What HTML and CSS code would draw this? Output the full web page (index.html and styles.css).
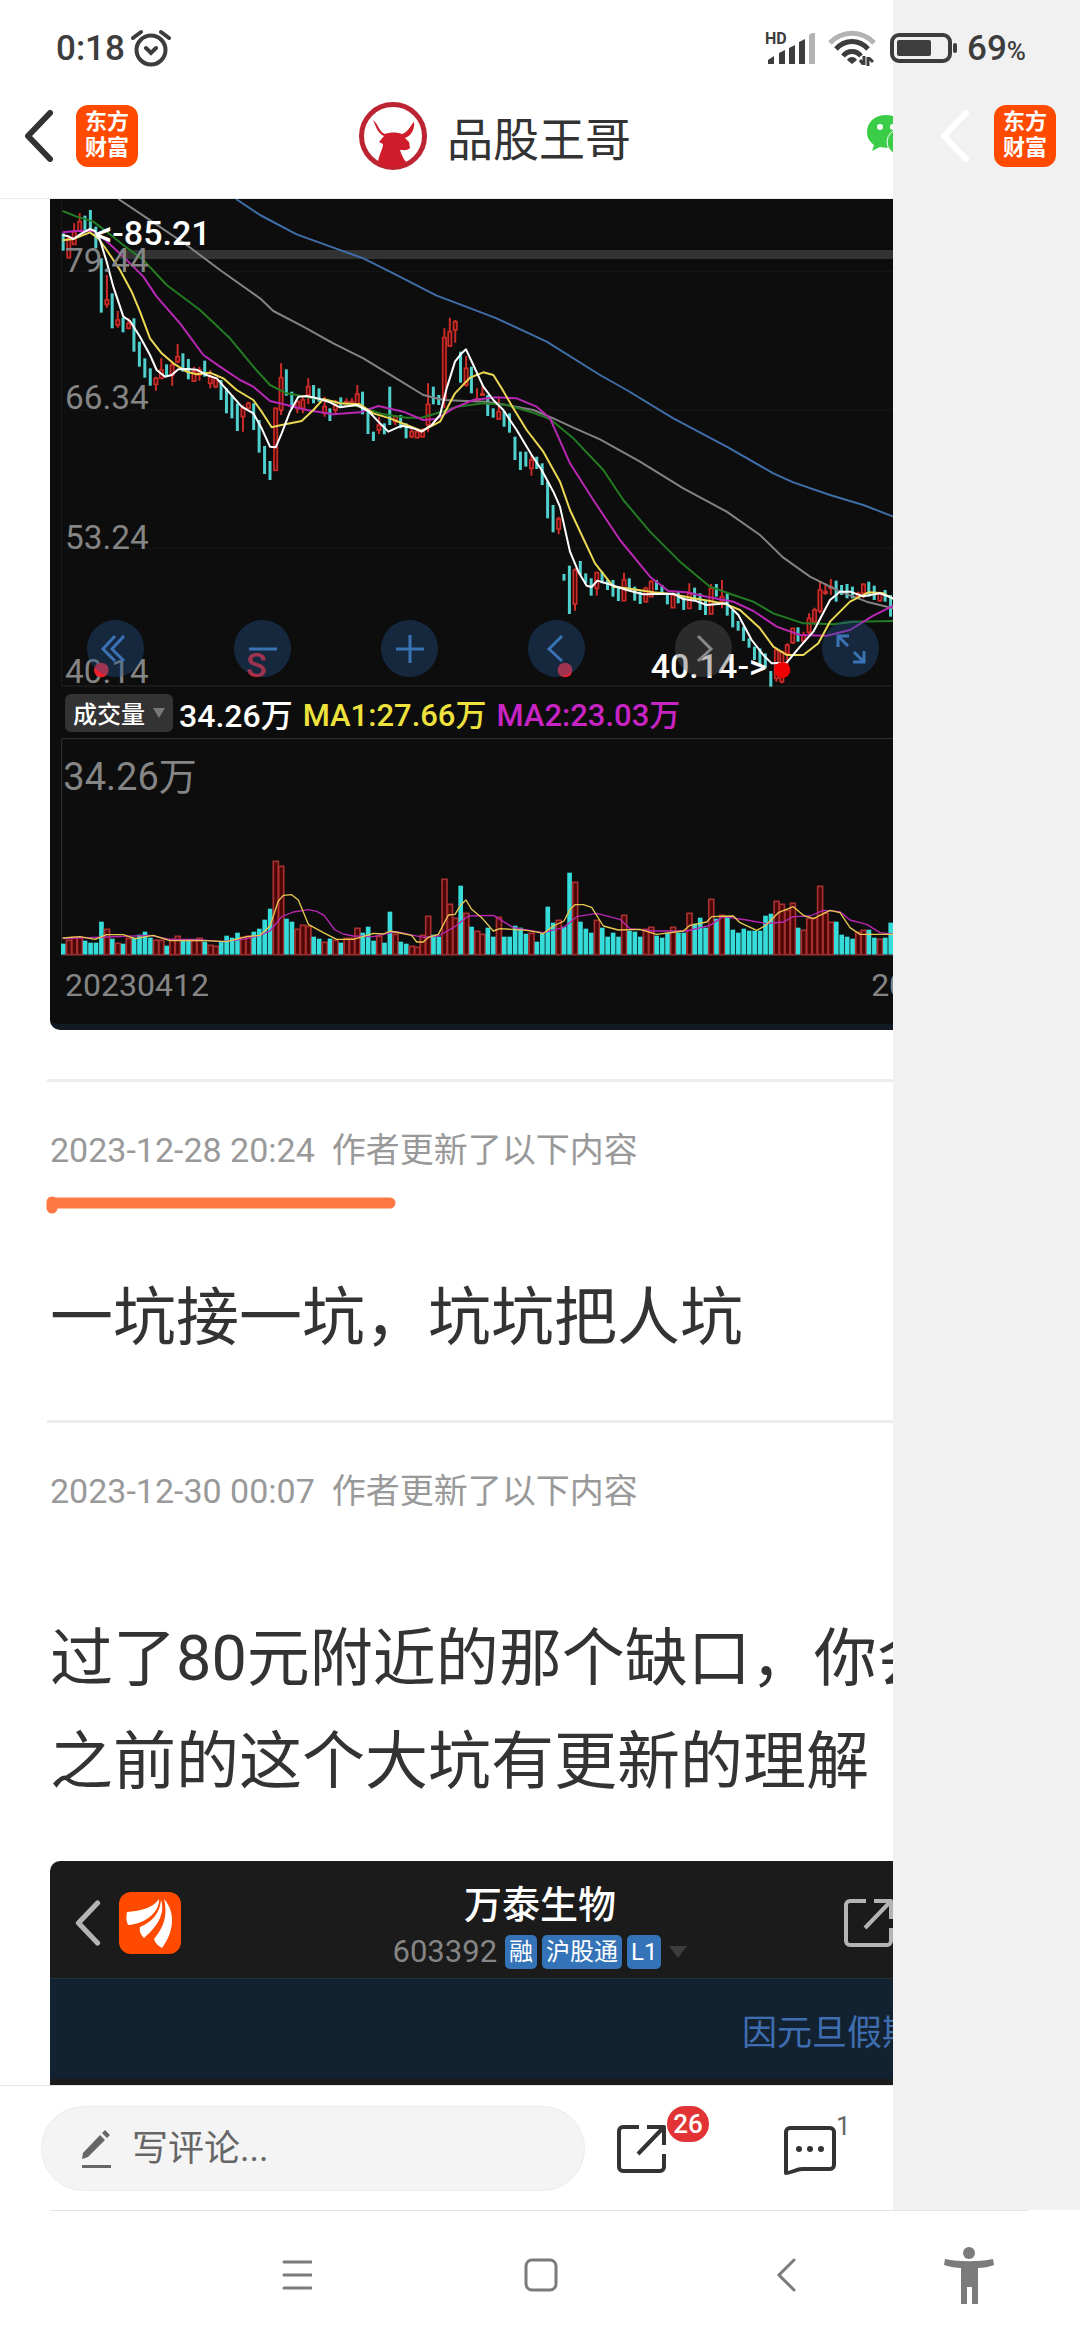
FILE: index.html
```html
<!DOCTYPE html>
<html lang="zh-CN">
<head>
<meta charset="utf-8">
<meta name="viewport" content="width=device-width, initial-scale=1">
<title>品股王哥</title>
<link rel="stylesheet" href="styles.css">
</head>
<body>
<svg class="defs" aria-hidden="true">
  <symbol id="i-back" viewBox="0 0 30 52"><path d="M26 3 4 26l22 23" fill="none" stroke="currentColor" stroke-width="6" stroke-linecap="round" stroke-linejoin="round"/></symbol>
  <symbol id="i-share" viewBox="0 0 50 50"><path d="M22 3H6a4 4 0 0 0-4 4v36a4 4 0 0 0 4 4h37a4 4 0 0 0 4-4V30M30 3h17v18M46 4 21 30" fill="none" stroke="currentColor" stroke-width="4" stroke-linejoin="round"/></symbol>
</svg>

<div class="screen">
  <div class="status">
    <span class="clock">0:18</span>
    <svg class="alarm" viewBox="0 0 40 38" width="40" height="38" fill="none" stroke="currentColor" stroke-width="4" stroke-linecap="round"><circle cx="20" cy="21" r="14.500"/><path d="m15 19 5 5 5-5M2 9l8-6M38 9l-8-6"/></svg>
    <svg class="signal" viewBox="0 0 52 36" width="52" height="36" fill="currentColor"><text x="0" y="14" font-size="16" font-weight="700">HD</text><path d="M3 34v-4l6-4v8zM14 34V23l6-3v14zM24 34V18l6-3v19zM34 34V12l6-3v25z"/><path d="M44 34V5l3-2h3v31z" fill="#b3b3b3"/></svg>
    <svg class="wifi" viewBox="0 0 48 36" width="48" height="36" fill="none" stroke="currentColor" stroke-width="5"><path d="M2 13c12-13 32-13 44 0" stroke="#b3b3b3"/><path d="M8 19c9-10 23-10 32 0M15 26c5-6 13-6 18 0"/><path d="m24 34-5-4c2-4 8-4 10 0z" fill="currentColor" stroke="none"/><path d="M36 26v9M35 34l-3-4M40 36v-9M41 28l4 4" stroke-width="3"/></svg>
    <svg class="battery" viewBox="0 0 70 32" width="70" height="32"><rect x="3" y="3" width="58" height="26" rx="7" fill="none" stroke="currentColor" stroke-width="4"/><rect x="8" y="8" width="34" height="16" rx="2" fill="currentColor"/><rect x="64" y="11" width="4" height="10" rx="2" fill="currentColor"/></svg>
    <span class="level">69<small>%</small></span>
  </div>

  <main class="panel">
    <div class="page">
      <header class="topbar">
        <button class="icon-btn" aria-label="返回"><svg width="30" height="52"><use href="#i-back"/></svg></button>
        <span class="brand">东方财富</span>
        <svg class="avatar" viewBox="0 0 68 68" width="68" height="68"><circle cx="34" cy="34" r="31.500" fill="#fff" stroke="#bb2430" stroke-width="5"/><path d="M14 18c5 3 6 12 12 14 5-2 12-2 17 0 7-2 9-10 12-12 1 7-3 14-9 16l4 4 1 6c-3 3-6 2-10 2 2 6 4 10 7 13-8 6-21 6-29 0 1-10 5-13 5-19l-4-2 5-6c-7-3-8-10-11-16z" fill="#d01c2a"/></svg>
        <h1>品股王哥</h1>
        <button class="icon-btn wechat" aria-label="分享到微信"><svg viewBox="0 0 54 48" width="54" height="48"><path d="M20 3C9 3 1 10 1 20c0 6 3 10 7 13l-2 6 8-4c11 3 25-3 26-15C40 10 31 3 20 3z" fill="#3bcd48"/><circle cx="14" cy="15" r="3" fill="#fff"/><circle cx="27" cy="15" r="3" fill="#fff"/><ellipse cx="37" cy="30" rx="16" ry="14" fill="#3bcd48" stroke="#fff" stroke-width="1"/></svg></button>
      </header>

      <article class="article">
        <figure class="stock">
          <div class="price">
            <svg id="price" viewBox="30 12 2940 1464">
              <g stroke="#333" stroke-width="2" fill="none"><path d="M65 12V1473" stroke="#262626"/><path d="M65 230H2970M65 645H2970M65 1060H2970" stroke-dasharray="3 5"/><path d="M65 1473H2970"/></g>
              <rect x="240" y="165" width="2730" height="27" fill="#333"/>
              <g id="candles"></g>
              <g class="ma">
                <polyline stroke="#3f6ea8" points="588,12 660,60 770,118 880,158 970,190 1060,235 1190,302 1260,328 1370,370 1520,440 1680,540 1760,585 1900,670 2060,755 2200,835 2260,862 2370,900 2470,930 2560,965"/>
                <polyline stroke="#838383" points="235,12 340,82 440,150 540,225 660,310 700,348 790,395 880,445 970,490 1060,545 1150,600 1210,615 1260,617 1340,620 1400,630 1480,645 1540,670 1600,698 1680,733 1800,800 1930,880 2060,950 2160,1020 2230,1088 2310,1145 2400,1190 2480,1220 2560,1240"/>
                <polyline stroke="#237c23" points="68,48 110,65 160,80 200,110 250,150 310,195 380,270 480,345 570,430 640,515 690,570 740,595 800,606 880,620 960,635 1030,658 1100,668 1145,668 1200,652 1250,635 1330,625 1400,630 1470,650 1530,672 1600,730 1690,825 1750,915 1830,1010 1920,1100 2010,1175 2080,1200 2140,1220 2200,1255 2290,1285 2380,1288 2440,1280 2560,1278"/>
                <polyline stroke="#b928b4" points="68,112 110,108 160,108 190,130 250,185 310,245 350,305 420,385 490,480 540,515 600,555 640,575 690,618 740,630 800,645 880,658 960,652 1015,633 1090,650 1150,675 1190,672 1240,640 1300,615 1370,607 1430,610 1490,635 1530,670 1590,805 1660,915 1740,1035 1830,1145 1885,1188 1940,1192 2000,1205 2080,1220 2140,1248 2210,1295 2280,1320 2360,1322 2430,1305 2500,1262 2560,1232"/>
                <polyline stroke="#ecd855" points="68,136 100,132 150,112 175,130 200,165 240,225 275,290 300,350 330,430 365,475 400,505 440,530 470,538 510,533 550,550 590,585 640,615 665,650 695,697 725,690 785,678 820,645 850,612 900,625 960,628 1000,655 1050,670 1100,690 1145,708 1200,680 1245,595 1290,548 1330,532 1360,540 1385,580 1420,640 1460,705 1510,770 1560,860 1590,945 1625,1020 1665,1105 1720,1175 1760,1180 1840,1192 1900,1198 1960,1210 2010,1218 2060,1228 2100,1245 2160,1300 2200,1355 2240,1380 2290,1380 2335,1345 2370,1280 2430,1220 2485,1192 2530,1195 2560,1212"/>
                <polyline stroke="#fff" points="68,120 85,124 100,132 125,115 150,102 165,108 180,135 200,200 220,275 250,365 270,378 300,425 330,480 350,525 375,545 395,540 415,523 440,522 470,524 500,540 530,550 570,595 605,635 640,655 665,700 690,755 707,757 725,715 750,650 775,605 800,603 840,612 870,622 900,637 950,630 985,648 1015,680 1045,710 1085,692 1120,700 1145,710 1175,690 1200,660 1220,580 1245,500 1262,478 1278,463 1300,510 1330,575 1360,615 1390,645 1430,705 1475,780 1505,825 1540,890 1560,935 1590,1070 1615,1130 1640,1172 1655,1176 1672,1157 1715,1170 1760,1185 1810,1198 1900,1196 1930,1212 1965,1217 2000,1230 2060,1225 2095,1260 2135,1335 2170,1380 2195,1405 2240,1403 2280,1355 2320,1310 2370,1215 2400,1190 2430,1190 2470,1204 2520,1195 2560,1210"/>
              </g>
              <g class="axis"><text x="75" y="230">79.44</text><text x="75" y="643">66.34</text><text x="75" y="1061">53.24</text><text x="75" y="1465">40.14</text></g>
              <g class="peak"><text x="165" y="149">&lt;-85.21</text><text x="1832" y="1448">40.14-&gt;</text></g>
              <g fill="#f0202c"><circle cx="184" cy="1425" r="22"/><text class="sell" x="618" y="1447">S</text><circle cx="1575" cy="1425" r="22"/><circle cx="2227" cy="1425" r="24" fill="#f00000"/></g>
            </svg>
            <div class="tools">
              <button aria-label="最前"><svg viewBox="0 0 57 57"><path d="M28 16 16 29l12 12M37 16 25 29l12 12"/></svg></button>
              <button aria-label="缩小"><svg viewBox="0 0 57 57"><path d="M15 29h28"/></svg></button>
              <button aria-label="放大"><svg viewBox="0 0 57 57"><path d="M15 29h28M29 15v28"/></svg></button>
              <button aria-label="向前"><svg viewBox="0 0 57 57"><path d="M34 16 21 29l13 12"/></svg></button>
              <button class="off" aria-label="向后"><svg viewBox="0 0 57 57"><path d="m23 16 13 13-13 12"/></svg></button>
              <button aria-label="全屏"><svg viewBox="0 0 57 57"><path d="M16 27V16h11M16 16l10 10M42 31v11H31M42 42 32 32"/></svg></button>
            </div>
          </div>
          <div class="legend">
            <button class="chip">成交量<svg viewBox="0 0 12 10" width="12" height="10"><path d="M0 0h12L6 10z" fill="#777"/></svg></button>
            <span>34.26万</span><span class="ma1">MA1:27.66万</span><span class="ma2">MA2:23.03万</span>
          </div>
          <svg id="volume" viewBox="30 176 2940 654">
            <path d="M65 828V178H2970" fill="none" stroke="#484848" stroke-width="2"/>
            <text class="peak-volume" x="70" y="331">34.26万</text>
            <g id="bars"></g>
            <path d="M65 828H2970" stroke="#552020" stroke-width="3"/>
            <g class="ma thin">
              <polyline stroke="#b928b4" points="68,778 200,773 330,768 390,780 470,780 540,787 610,780 660,768 690,755 725,712 760,698 805,691 830,696 852,708 885,752 910,764 940,770 1000,772 1070,757 1110,766 1150,774 1195,770 1240,745 1285,710 1360,708 1420,745 1510,760 1570,745 1610,712 1670,702 1740,720 1770,748 1840,755 1940,755 2010,738 2050,712 2120,722 2180,733 2230,728 2260,712 2310,710 2350,693 2400,697 2430,722 2480,735 2520,760 2560,765"/>
              <polyline stroke="#e6c850" points="68,776 120,772 165,780 200,766 250,766 285,778 340,768 390,784 450,783 500,784 560,787 620,772 660,768 690,740 715,665 730,648 755,646 775,662 805,735 850,760 890,780 940,780 1000,762 1030,764 1050,755 1115,768 1130,788 1150,788 1165,774 1195,765 1225,707 1245,705 1263,676 1278,662 1295,690 1325,715 1360,755 1380,748 1460,753 1500,760 1508,764 1540,740 1572,725 1590,690 1605,676 1630,676 1655,684 1690,740 1735,752 1800,750 1850,765 1930,755 1950,738 2000,728 2015,712 2080,710 2100,730 2150,753 2175,740 2215,700 2260,682 2290,708 2320,718 2370,693 2400,700 2430,745 2460,765 2560,765"/>
            </g>
          </svg>
          <figcaption class="dates"><span>20230412</span><span>20231228</span></figcaption>
        </figure>

        <section class="update">
          <p class="meta marked">2023-12-28 20:24&nbsp; 作者更新了以下内容
            <svg class="mark" viewBox="0 0 352 20" width="352" height="20"><path d="M7 8v6" stroke="#ff7843" stroke-width="11" stroke-linecap="round"/><path d="M8 9c100 1 230-1 337 0" fill="none" stroke="#ff7843" stroke-width="11" stroke-linecap="round"/></svg>
          </p>
          <p class="body">一坑接一坑，坑坑把人坑</p>
        </section>

        <section class="update">
          <p class="meta">2023-12-30 00:07&nbsp; 作者更新了以下内容</p>
          <p class="body">过了80元附近的那个缺口，你会<br>之前的这个大坑有更新的理解</p>
        </section>

        <figure class="quote">
          <div class="quote-head">
            <div class="quote-nav">
              <svg width="26" height="46"><use href="#i-back"/></svg>
              <svg viewBox="0 0 62 62" width="62" height="62"><rect width="62" height="62" rx="12" fill="#ff4a00"/><path d="M8 20C22 19 34 16 40 7c1 12-13 25-31 26-2-4-2-9-1-13z" fill="#fff"/><path d="M42 8c5 14-5 28-17 38-3-3-5-7-4-11 12-5 20-14 21-27z" fill="#fff"/><path d="M45 7c12 13 10 33-2 49-4-2-7-5-8-9 10-12 14-24 10-40z" fill="#fff"/></svg>
            </div>
            <div class="quote-title">
              <strong>万泰生物</strong>
              <div class="code">603392<span class="tags"><i>融</i><i>沪股通</i><i>L1</i></span><svg viewBox="0 0 18 12" width="18" height="12"><path d="M0 0h18L9 12z" fill="#3c3c3c"/></svg></div>
            </div>
            <svg class="quote-share" width="50" height="50"><use href="#i-share"/></svg>
          </div>
          <p class="notice">因元旦假期</p>
        </figure>
      </article>

      <form class="comment">
        <label class="field">
          <svg viewBox="0 0 30 40" width="30" height="40" fill="#666"><path d="M0 30 1 24 18 6l5 5L6 28zM20 4l3-3 5 5-3 3zM0 36h29v3H0z"/></svg>
          <input type="text" placeholder="写评论..." aria-label="写评论">
        </label>
        <button type="button" class="icon-btn share" aria-label="转发"><svg width="50" height="50"><use href="#i-share"/></svg><span class="badge">26</span></button>
        <button type="button" class="icon-btn talk" aria-label="评论"><svg viewBox="0 0 52 50" width="52" height="50"><path d="M2 47V6a4 4 0 0 1 4-4h40a4 4 0 0 1 4 4v33a4 4 0 0 1-4 4H18c-6 0-10 4-16 4z" fill="none" stroke="currentColor" stroke-width="4" stroke-linejoin="round"/><g fill="currentColor"><circle cx="15" cy="23" r="3"/><circle cx="26" cy="23" r="3"/><circle cx="37" cy="23" r="3"/></g></svg><span class="count">1</span></button>
      </form>
    </div>
  </main>

  <aside class="drawer">
    <button class="icon-btn" aria-label="返回"><svg width="30" height="52"><use href="#i-back"/></svg></button>
    <span class="brand">东方财富</span>
  </aside>
</div>

<nav class="sysnav">
  <button aria-label="菜单"><svg viewBox="0 0 30 30" width="30" height="30"><path d="M2 2h27M2 15h27M2 28h27" stroke-width="3"/></svg></button>
  <button aria-label="主页"><svg viewBox="0 0 34 34" width="34" height="34"><rect x="2" y="2" width="30" height="30" rx="6" stroke-width="3"/></svg></button>
  <button aria-label="后退"><svg viewBox="0 0 20 34" width="20" height="34"><path d="M18 2 3 17l15 15" stroke-width="3"/></svg></button>
  <button aria-label="无障碍"><svg viewBox="0 0 50 58" width="50" height="58"><g fill="currentColor" stroke="none"><circle cx="25" cy="7" r="6"/><path d="M1 13c14 3 34 3 48 0l1 6c-5 2-11 3-16 3v36h-6V41h-5v17h-6V22c-5 0-11-1-17-3z"/></g></svg></button>
</nav>
<script src="chart.js"></script>
</body>
</html>
```

FILE: styles.css
```css
* { box-sizing: border-box; }
body {
  margin: 0;
  min-height: 100vh;
  display: flex;
  flex-direction: column;
  background: #fff;
  color: #333;
  font-family: Roboto, "Noto Sans CJK SC", sans-serif;
}
p, h1, figure { margin: 0; }
svg { display: block; flex: none; }
button {
  border: 0;
  padding: 0;
  background: none;
  color: inherit;
  font: inherit;
}
.defs { position: absolute; width: 0; height: 0; }

.screen {
  flex: 1;
  display: grid;
  grid-template-columns: minmax(0, 1fr) 187px;
  grid-template-rows: 80px 1fr;
}

/* status bar lies across the page and the drawer */
.status {
  grid-area: 1 / 1 / 2 / 3;
  z-index: 1;
  display: flex;
  align-items: center;
  padding: 16px 54px 0 56px;
  color: #3d3d3d;
  font-weight: 500;
}
.clock { font-size: 35px; }
.alarm { margin-left: 6px; }
.signal { margin-left: auto; overflow: visible; }
.wifi { margin-left: 11px; }
.battery { margin-left: 13px; }
.level { margin-left: 8px; font-size: 35px; }
.level small { font-size: 26px; }

.panel {
  grid-area: 1 / 1 / 3 / 2;
  overflow: hidden;
  padding-top: 80px;
}
/* the page keeps the window's width while the drawer covers its edge */
.page { width: 100vw; height: 100%; display: flex; flex-direction: column; }
.drawer {
  grid-area: 1 / 2 / 3 / 3;
  display: flex;
  align-items: flex-start;
  gap: 24px;
  padding: 105px 0 0 47px;
  background: #f1f1f1;
  color: #fff;
}
.drawer .icon-btn { padding-top: 5px; }

.topbar {
  display: flex;
  align-items: center;
  height: 119px;
  padding: 0 160px 6px 24px;
  border-bottom: 1px solid #eaeaea;
}
.icon-btn { display: block; position: relative; }
.brand {
  width: 62px;
  height: 62px;
  padding: 4px 9px;
  border-radius: 12px;
  background: #ff4a00;
  color: #fff;
  font-size: 22px;
  line-height: 26px;
  font-weight: 700;
}
.topbar .brand { margin-left: 22px; }
.avatar { margin-left: 221px; }
.topbar h1 { margin-left: 20px; font-size: 46px; font-weight: 400; }
.wechat { margin-left: auto; }

.article { flex: 1; padding: 0 50px; }

.stock {
  overflow: hidden;
  border-radius: 0 0 10px 10px;
  border-bottom: 6px solid #111922;
  background: #0d0d0d;
}
.price { position: relative; }
#price, #volume { width: 100%; height: auto; }
.ma { fill: none; stroke-width: 6; stroke-linejoin: round; }
.thin { stroke-width: 4; }
.axis { font-size: 100px; fill: #858585; }
.peak { font-size: 102px; font-weight: 500; fill: #fff; }
.sell { font-size: 102px; font-weight: 500; }
.peak-volume { font-size: 114px; fill: #858585; }
.tools {
  position: absolute;
  left: 37px;
  bottom: 10px;
  display: flex;
  gap: 90px;
}
.tools button {
  width: 57px;
  height: 57px;
  border-radius: 50%;
  background: rgba(35, 83, 138, .4);
}
.tools svg { fill: none; stroke: #3a72b4; stroke-width: 3; }
.tools .off { background: rgba(90, 90, 90, .4); }
.tools .off svg { stroke: #888; }

.legend {
  display: flex;
  align-items: center;
  gap: 10px;
  height: 51px;
  padding-left: 15px;
  color: #fff;
  font-size: 32px;
  font-weight: 500;
}
.chip {
  display: flex;
  align-items: center;
  gap: 8px;
  height: 38px;
  padding: 0 8px;
  border-radius: 6px;
  background: #333;
  font-size: 24px;
}
.chip + span { margin-left: -4px; }
.ma1 { color: #efe23c; }
.ma2 { color: #c824c4; }
.ma1, .ma2 { font-size: 31px; }
.dates {
  display: flex;
  justify-content: space-between;
  height: 68px;
  padding: 9px 15px;
  color: #858585;
  font-size: 32px;
  line-height: 40px;
}

.update {
  margin: 0 -3px;
  padding: 48px 3px 51px;
  border-top: 3px solid #ededed;
}
.stock + .update { margin-top: 49px; }
.meta { position: relative; color: #999; font-size: 34px; line-height: 40px; }
.mark { position: absolute; left: -5px; top: 64px; }
.body { margin-top: 96px; font-size: 63px; line-height: 103px; }
.update + .quote { margin-top: -3px; }

.quote {
  overflow: hidden;
  border-radius: 10px 10px 0 0;
  border-bottom: 6px solid #1b1b1b;
  background: #1b1b1b;
}
.quote-head {
  display: grid;
  grid-template-columns: 1fr auto 1fr;
  align-items: center;
  height: 118px;
  padding-top: 6px;
  border-bottom: 1px solid #24323a;
}
.quote-nav {
  display: flex;
  align-items: center;
  gap: 18px;
  padding-left: 25px;
  color: #b4b4b4;
}
.quote-title { padding-top: 8px; text-align: center; color: #fff; }
.quote-title strong { display: block; font-size: 38px; line-height: 50px; font-weight: 500; }
.code {
  display: flex;
  align-items: center;
  gap: 8px;
  height: 44px;
  color: #858585;
  font-size: 31px;
}
.tags { display: flex; gap: 5px; }
.tags i {
  padding: 0 4px;
  border-radius: 5px;
  background: #3573b9;
  color: #fff;
  font-size: 24px;
  line-height: 34px;
  font-style: normal;
}
.quote-share { justify-self: end; margin-right: 136px; color: #b4b4b4; }
.notice {
  padding: 30px 0 20px 692px;
  background: #132231;
  color: #3f6eb0;
  font-size: 35px;
  line-height: 50px;
}

.comment {
  display: flex;
  align-items: center;
  height: 125px;
  padding: 1px 0 0 41px;
  border-top: 1px solid #e6e6e6;
}
.field {
  display: flex;
  align-items: center;
  gap: 20px;
  width: 544px;
  height: 85px;
  padding: 0 40px;
  border: 1px solid #ebebeb;
  border-radius: 43px;
  background: #f4f4f4;
}
.field input {
  flex: 1;
  min-width: 0;
  border: 0;
  padding: 0;
  background: none;
  font: inherit;
  font-size: 36px;
}
.field input::placeholder { color: #666; opacity: 1; }
.share { margin-left: 32px; }
.badge {
  position: absolute;
  left: 50px;
  top: -18px;
  width: 42px;
  border-radius: 18px;
  background: #e23434;
  color: #fff;
  font-size: 26px;
  line-height: 36px;
  font-weight: 500;
}
.talk { margin: 4px 0 0 117px; }
.count {
  position: absolute;
  left: 52px;
  top: -15px;
  color: #666;
  font-size: 26px;
  line-height: 30px;
}

.sysnav {
  display: grid;
  grid-template-columns: 2fr 2fr 2fr 1fr;
  align-items: center;
  height: 130px;
  padding: 0 50px 0 175px;
  color: #7b7b7b;
  background: linear-gradient(#e4e4e4, #e4e4e4) 50px 0 / calc(100% - 102px) 1px no-repeat;
}
.sysnav button { justify-self: center; }
.sysnav svg { fill: none; stroke: currentColor; stroke-linecap: round; }
```

FILE: chart.js
```js
const NS = "http://www.w3.org/2000/svg";
const PITCH = 16.33, FIRST = 70;
const UP = "#cc2c28", DOWN = "#4fd0cd";

// one day each: direction, high, low and, for a rising day, body top and bottom
const days = `c 115 167|r 125 190 130 188|r 85 150 110 148|r 55 110 80 108|c 62 105|c 45 100|c 95 160|c 190 353|r 240 338 315 328|c 295 400|r 348 398 375 390|c 368 412|r 370 403 385 400|c 370 470|c 440 515|c 490 548|c 520 572|r 545 587 550 568|r 490 552 525 550|c 508 545|r 500 572 510 540|r 447 505 485 500|c 475 530|c 492 553|r 515 560 530 558|r 515 557 525 540|c 497 545|r 525 580 545 565|r 545 580 550 575|c 555 615|c 580 655|c 600 670|c 625 708|r 630 710 640 665|r 620 640 625 640|c 625 705|c 675 773|c 753 837|c 798 855|r 638 826 640 826|r 505 660 548 645|c 523 602|c 590 640|r 615 655 620 640|r 600 655 615 640|r 550 627 575 600|c 570 625|c 580 620|r 605 665 635 655|c 640 678|r 615 660 630 645|c 607 635|r 610 635 620 630|r 610 635 620 630|r 570 635 597 630|c 590 658|c 640 717|c 710 738|r 665 717 690 705|c 685 718|c 575 690|r 660 690 665 680|c 660 700|c 685 730|r 695 730 710 725|r 700 730 710 728|r 700 728 705 725|r 565 712 628 690|c 575 628|c 600 630|r 400 640 428 610|r 368 455 410 453|r 375 443 380 405|c 470 563|r 483 575 520 570|c 515 595|r 580 615 612 615|r 570 600 597 600|c 600 663|c 640 668|r 610 675 650 672|c 648 695|c 655 713|c 725 795|c 770 825|c 770 815|r 780 842 795 820|c 785 822|c 805 870|c 860 970|c 930 1012|r 965 1018 972 1002|c 1137 1157|c 1112 1257|r 1120 1247 1125 1227|c 1098 1140|c 1135 1165|c 1150 1202|r 1130 1202 1133 1180|c 1130 1165|c 1155 1185|c 1155 1205|c 1175 1218|r 1133 1218 1155 1217|c 1150 1185|c 1175 1217|c 1190 1227|r 1175 1223 1180 1220|r 1155 1205 1160 1205|c 1155 1185|c 1170 1200|c 1195 1228|r 1200 1238 1200 1238|c 1190 1225|c 1205 1245|r 1165 1243 1195 1240|c 1178 1215|c 1195 1245|c 1215 1260|r 1167 1257 1180 1257|c 1167 1205|r 1155 1240 1205 1220|c 1195 1262|c 1245 1297|c 1278 1307|c 1295 1338|c 1330 1358|c 1355 1395|c 1360 1412|c 1375 1420|c 1428 1475|r 1360 1460 1365 1450|r 1370 1465 1370 1460|r 1345 1410 1350 1375|r 1300 1347 1300 1343|c 1297 1340|r 1310 1340 1320 1338|r 1255 1325 1270 1312|r 1238 1290 1245 1280|r 1160 1255 1185 1248|r 1165 1200 1190 1194|r 1152 1200 1175 1180|c 1157 1220|c 1170 1200|c 1167 1210|c 1175 1210|r 1190 1205 1195 1203|r 1165 1210 1168 1195|c 1160 1205|c 1172 1215|r 1190 1220 1195 1217|c 1185 1220|c 1200 1265`
  .split("|").map(d => d.split(" "));

// traded volume of the same days, as bar heights
const volumes = [11,15,18,18,14,12,12,33,26,16,12,11,17,17,20,23,17,15,15,9,16,19,14,15,15,17,13,10,9,13,19,17,22,18,19,23,26,35,46,94,89,36,33,26,30,29,18,16,13,16,15,12,17,17,27,22,28,14,19,12,43,21,13,11,9,8,20,39,20,18,76,51,37,69,42,28,24,21,27,18,38,18,18,29,27,21,22,13,21,48,32,35,28,82,73,33,26,22,35,27,18,22,18,40,24,23,18,26,28,19,17,22,28,22,22,42,31,37,27,56,36,40,38,25,22,26,24,24,24,39,41,54,51,45,52,27,25,37,37,69,42,33,33,20,18,16,23,25,25,17,16,17,32];

function add(parent, name, attrs) {
  const el = document.createElementNS(NS, name);
  for (const key in attrs) el.setAttribute(key, attrs[key]);
  parent.append(el);
}

const candles = document.getElementById("candles");
const bars = document.getElementById("bars");

days.forEach(([dir, high, low, top, bottom], i) => {
  const x = FIRST + i * PITCH;
  if (dir === "c") {
    add(candles, "rect", { x: x - 5, y: high, width: 9, height: low - high, fill: DOWN });
  } else {
    add(candles, "path", { d: `M${x} ${high}V${top}M${x} ${bottom}V${low}`, stroke: UP, "stroke-width": 6 });
    add(candles, "rect", { x: x - 5, y: top, width: 10, height: bottom - top, fill: "#4a0808", stroke: UP, "stroke-width": 5 });
  }
  const h = volumes[i] * 3;
  if (dir === "c") {
    add(bars, "rect", { x: x - 7, y: 826 - h, width: 14, height: h, fill: "#35dcda" });
  } else {
    add(bars, "rect", { x: x - 7, y: 828 - h, width: 15, height: h - 2, fill: "#4d0606", stroke: "#a83030", "stroke-width": 5 });
  }
});
```
